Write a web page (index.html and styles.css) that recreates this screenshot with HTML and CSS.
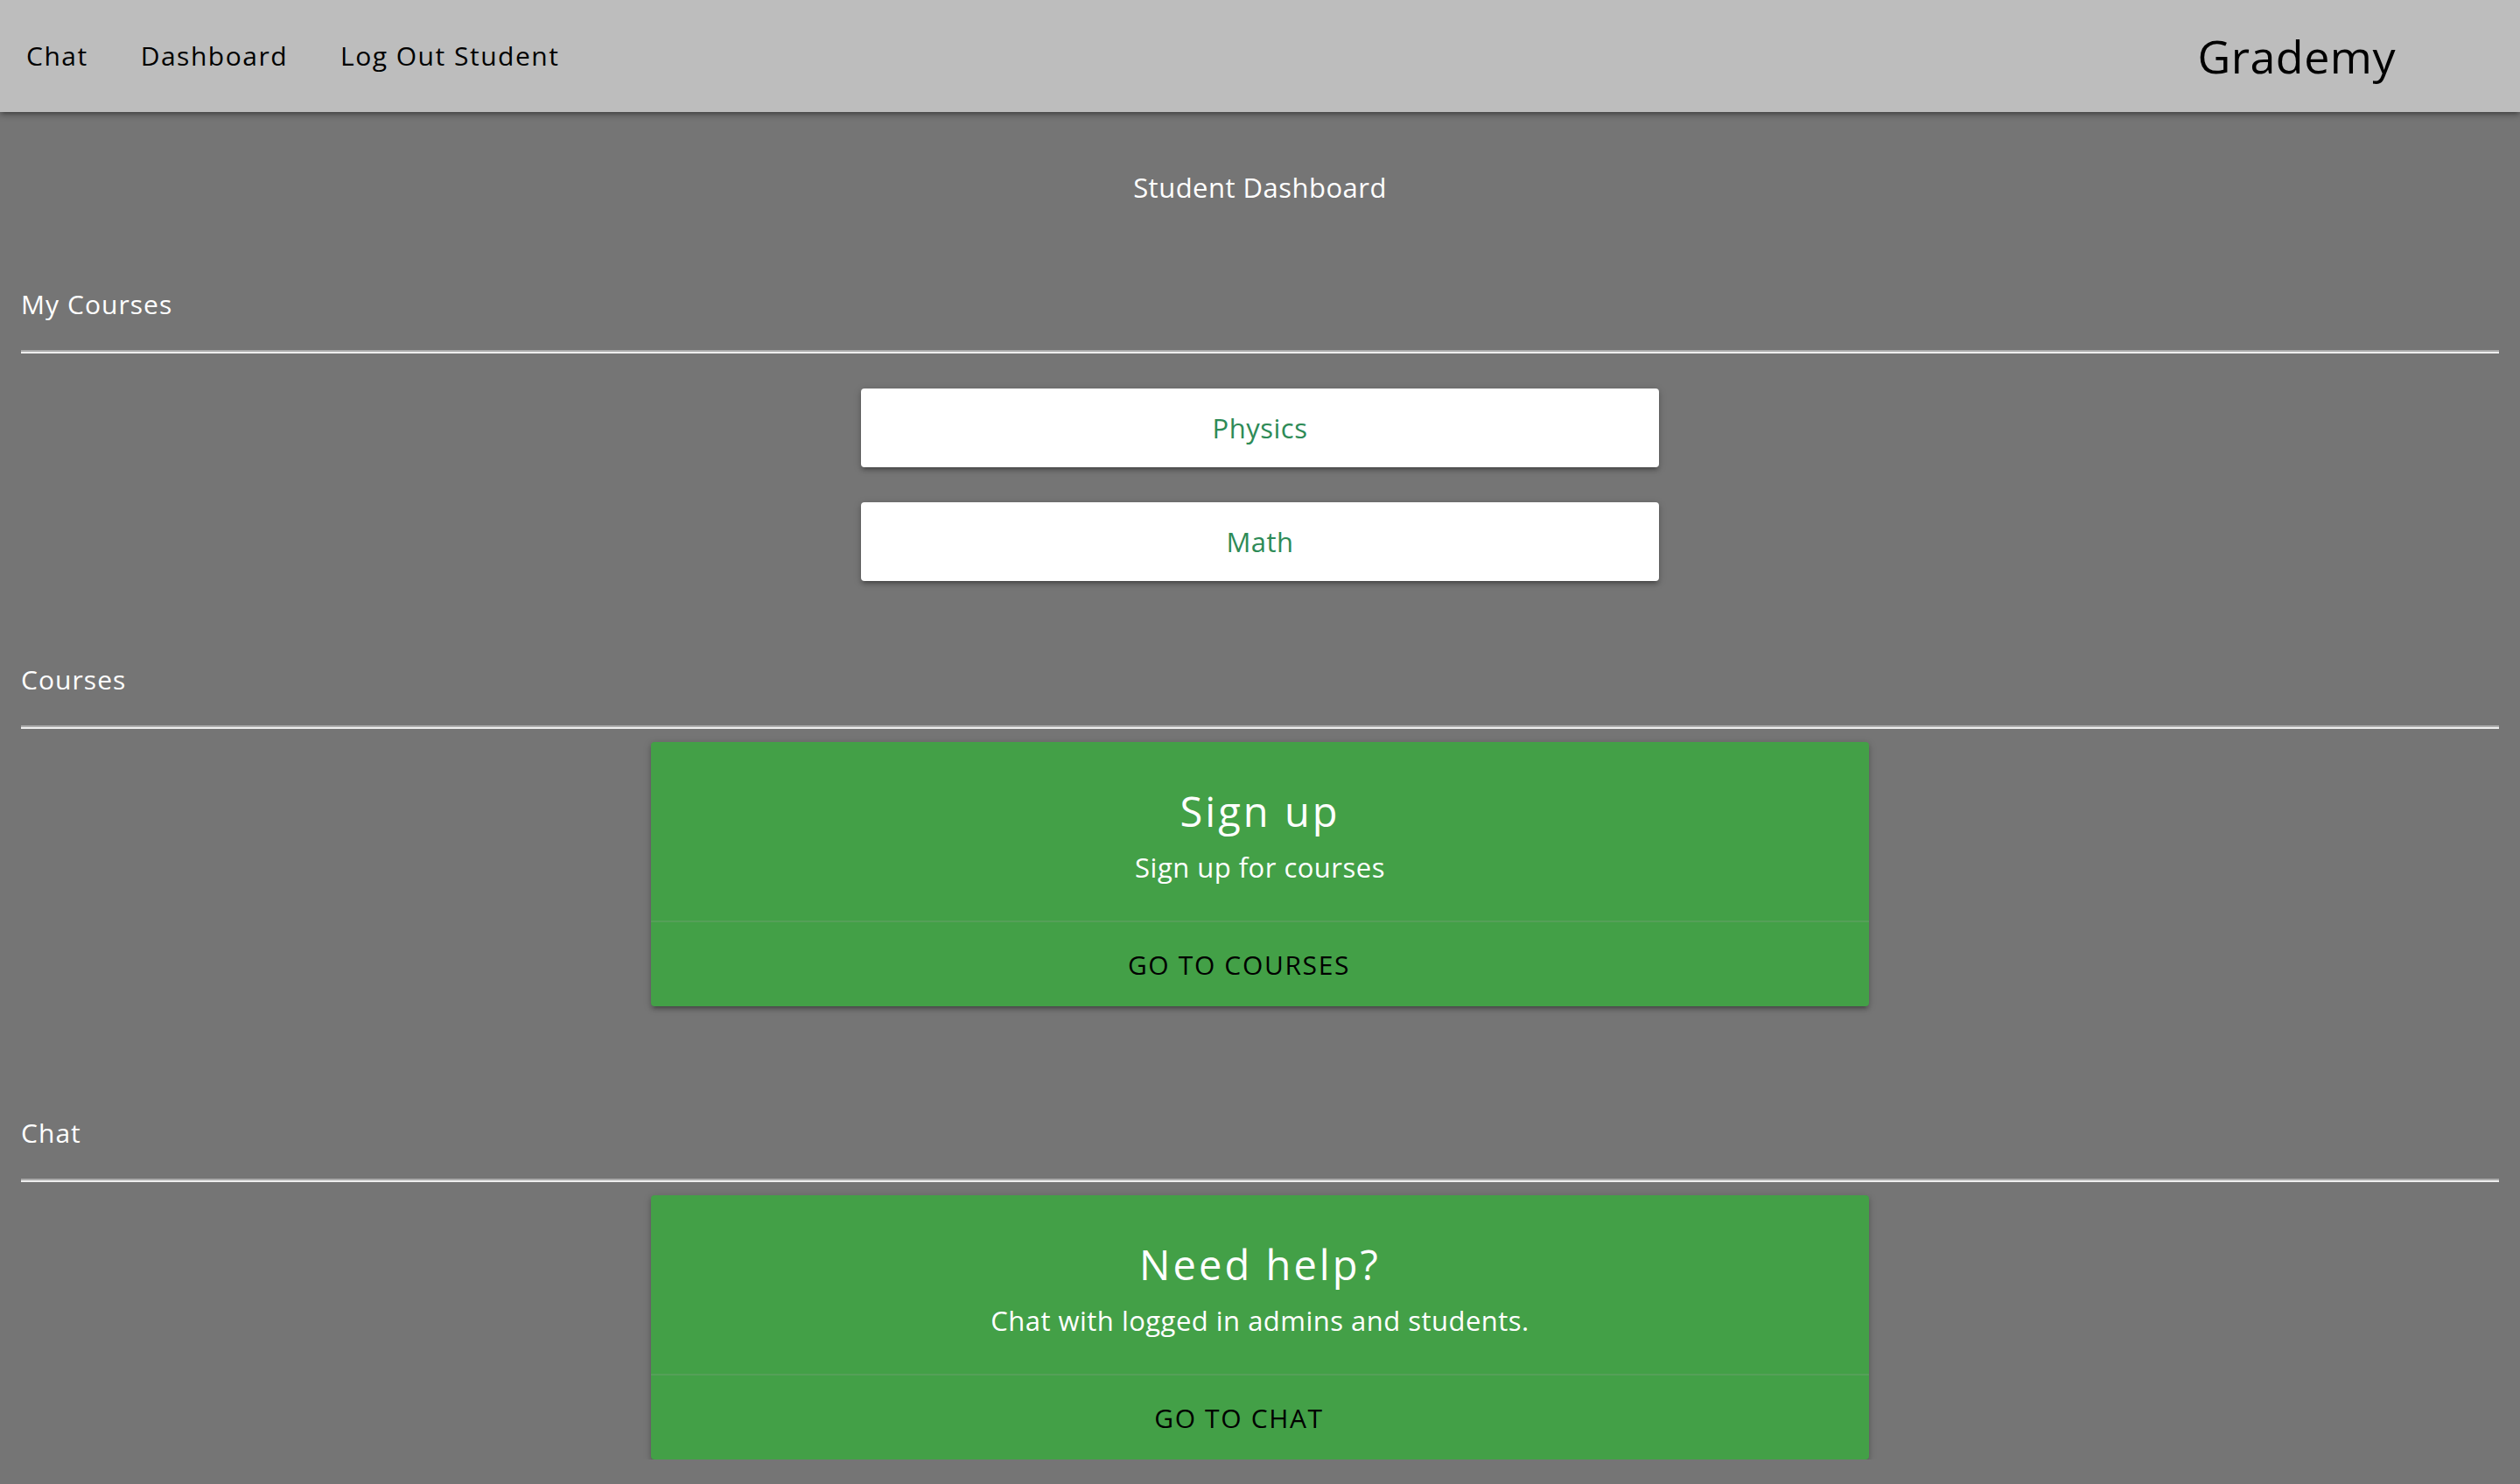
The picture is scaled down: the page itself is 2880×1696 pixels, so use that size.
FILE: index.html
```html
<!DOCTYPE html>
<html lang="en">
<head>
  <meta charset="UTF-8">
  <title>Grademy - Student Dashboard</title>
  <meta name="viewport" content="width=device-width, initial-scale=1">
  <link rel="stylesheet" href="styles.css">
</head>
<body>
  <nav class="topbar">
    <ul class="nav-links">
      <li><a href="#">Chat</a></li>
      <li><a href="#">Dashboard</a></li>
      <li><a href="#">Log Out Student</a></li>
    </ul>
    <a href="#" class="brand">Grademy</a>
  </nav>

  <main class="page">
    <h5 class="page-title">Student Dashboard</h5>

    <section class="section">
      <p class="section-label">My Courses</p>
      <hr class="divider">
      <div class="course-list">
        <a href="#" class="course-btn">Physics</a>
        <a href="#" class="course-btn">Math</a>
      </div>
    </section>

    <section class="section">
      <p class="section-label">Courses</p>
      <hr class="divider">
      <div class="card">
        <div class="card-content">
          <span class="card-title">Sign up</span>
          <p class="card-text">Sign up for courses</p>
        </div>
        <div class="card-action">
          <a href="#">Go to courses</a>
        </div>
      </div>
    </section>

    <section class="section">
      <p class="section-label">Chat</p>
      <hr class="divider">
      <div class="card">
        <div class="card-content">
          <span class="card-title">Need help?</span>
          <p class="card-text">Chat with logged in admins and students.</p>
        </div>
        <div class="card-action">
          <a href="#">Go to chat</a>
        </div>
      </div>
    </section>
  </main>
</body>
</html>
```

FILE: styles.css
```css
html, body {
  margin: 0;
}
body {
  background: #757575;
  color: #fff;
  font-family: "Open Sans", "Liberation Sans", sans-serif;
  letter-spacing: 0.03em;
}
.topbar {
  height: 128px;
  background: #bdbdbd;
  display: flex;
  align-items: center;
  justify-content: space-between;
  box-shadow: 0 4px 4px 0 rgba(0,0,0,.14), 0 6px 2px -4px rgba(0,0,0,.12), 0 2px 10px 0 rgba(0,0,0,.2);
}
.nav-links {
  display: flex;
  list-style: none;
  margin: 0;
  padding: 0;
}
.nav-links a {
  display: block;
  padding: 0 30px;
  line-height: 128px;
  font-size: 30px;
  letter-spacing: 0.05em;
  color: #000;
  text-decoration: none;
}
.brand {
  font-size: 52px;
  color: #000;
  text-decoration: none;
  margin-right: 142px;
  margin-top: -2px;
}
.page {
  padding: 62px 24px 0;
}
.page-title {
  margin: 0;
  text-align: center;
  font-size: 31px;
  font-weight: 400;
  line-height: 48px;
}
.section {
  display: flow-root;
}
.section-label {
  margin: 89px 0 0;
  font-size: 30px;
  line-height: 48px;
  letter-spacing: 0.035em;
}
.section:first-of-type .section-label {
  margin-top: 86px;
}
.divider {
  margin: 28px 0 0;
  height: 0;
  border: 0;
  border-top: 2px solid #ababab;
  border-bottom: 2px solid #eee;
}
.course-list {
  display: flex;
  flex-direction: column;
  align-items: center;
  gap: 40px;
  margin-top: 40px;
}
.course-btn {
  width: 912px;
  height: 90px;
  line-height: 90px;
  background: #fff;
  color: #2e8b57;
  font-size: 31px;
  text-align: center;
  text-decoration: none;
  border-radius: 4px;
  box-shadow: 0 4px 4px 0 rgba(0,0,0,.14), 0 6px 2px -4px rgba(0,0,0,.12), 0 2px 10px 0 rgba(0,0,0,.2);
}
.card {
  width: 1392px;
  margin: 15px auto 32px;
  background: #43a047;
  border-radius: 4px;
  box-shadow: 0 4px 4px 0 rgba(0,0,0,.14), 0 6px 2px -4px rgba(0,0,0,.12), 0 2px 10px 0 rgba(0,0,0,.2);
}
.section:last-child .card {
  margin-bottom: 0;
}
.card-content {
  padding: 47px 48px 37px;
  text-align: center;
}
.card-title {
  display: block;
  font-size: 47px;
  line-height: 64px;
  letter-spacing: 0.065em;
  margin-bottom: 8px;
}
.card-text {
  margin: 0;
  font-size: 31px;
  line-height: 48px;
}
.card-action {
  border-top: 2px solid rgba(160,160,160,.2);
  padding: 33px 48px 31px;
  text-align: center;
}
.card-action a {
  display: inline-block;
  margin-right: 48px;
  color: #000;
  font-size: 30px;
  line-height: 32px;
  letter-spacing: 0.055em;
  text-transform: uppercase;
  text-decoration: none;
}
```
